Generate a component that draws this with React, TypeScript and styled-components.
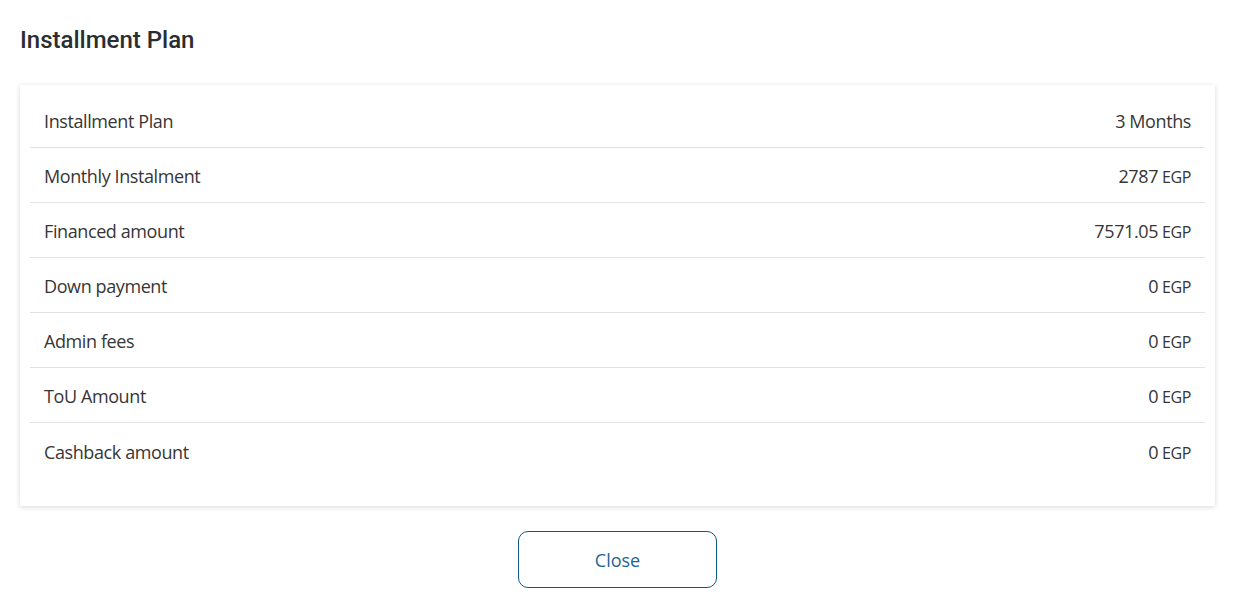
import React from 'react';
import styled, { createGlobalStyle } from 'styled-components';

interface PlanRow {
  label: string;
  value: string;
  unit?: string;
}

const rows: PlanRow[] = [
  { label: 'Installment Plan', value: '3 Months' },
  { label: 'Monthly Instalment', value: '2787', unit: 'EGP' },
  { label: 'Financed amount', value: '7571.05', unit: 'EGP' },
  { label: 'Down payment', value: '0', unit: 'EGP' },
  { label: 'Admin fees', value: '0', unit: 'EGP' },
  { label: 'ToU Amount', value: '0', unit: 'EGP' },
  { label: 'Cashback amount', value: '0', unit: 'EGP' },
];

const App: React.FC = () => {
  return (
    <>
      <GlobalStyle />
      <Page>
        <Heading>Installment Plan</Heading>
        <Card>
          {rows.map((row) => (
            <Row key={row.label}>
              <Label>{row.label}</Label>
              <Value>
                {row.value}
                {row.unit && <Unit>{row.unit}</Unit>}
              </Value>
            </Row>
          ))}
        </Card>
        <Actions>
          <CloseButton type="button">Close</CloseButton>
        </Actions>
      </Page>
    </>
  );
};

const GlobalStyle = createGlobalStyle`
  body {
    margin: 0;
    background: #fff;
    font-family: "Open Sans", "Noto Sans", sans-serif;
  }
`;

const Page = styled.div`
  width: 1240px;
  padding: 24px 25px 0 20px;
  box-sizing: border-box;
`;

const Heading = styled.h2`
  margin: 0 0 29px;
  font-family: Roboto, sans-serif;
  font-weight: 500;
  font-size: 24px;
  line-height: 32px;
  color: #2a2d31;
`;

const Card = styled.div`
  background-color: #fff;
  box-shadow: 0 1px 5px rgba(0, 0, 0, 0.16);
  padding: 8px 10px 28px;
  display: flex;
  flex-direction: column;
`;

const Row = styled.div`
  display: flex;
  justify-content: space-between;
  align-items: center;
  height: 55px;
  padding: 2px 14px 0;
  border-bottom: 1px solid #e2e2e2;
  color: #363636;
  font-size: 18px;
  letter-spacing: -0.4px;
  box-sizing: border-box;

  &:last-child {
    border-bottom: none;
  }
`;

const Label = styled.span``;

const Value = styled.span`
  display: flex;
  align-items: baseline;
  gap: 4px;
`;

const Unit = styled.span`
  font-size: 16px;
`;

const Actions = styled.div`
  display: flex;
  justify-content: center;
  padding-top: 25px;
`;

const CloseButton = styled.button`
  width: 199px;
  height: 57px;
  border: 1px solid #0b5a86;
  border-radius: 10px;
  background: #fff;
  color: #1c6690;
  font-family: "Open Sans", "Noto Sans", sans-serif;
  font-size: 18px;
  cursor: pointer;
`;

export default App;
